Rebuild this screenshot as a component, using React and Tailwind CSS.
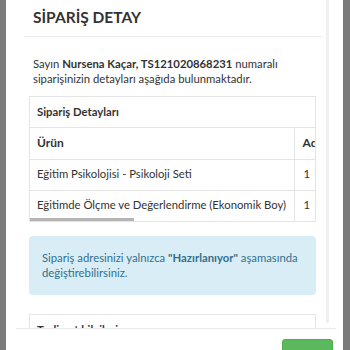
import React from 'react';

const rows = [
  { name: 'Eğitim Psikolojisi - Psikoloji Seti', qty: 1 },
  { name: 'Eğitimde Ölçme ve Değerlendirme (Ekonomik Boy)', qty: 1 },
];

export default function App() {
  return (
    <div className="w-[350px] h-[350px] bg-[#7b7b7b] overflow-hidden flex" style={{ fontFamily: 'Lato, "Open Sans", sans-serif' }}>
      {/* modal */}
      <div className="ml-[6px] w-[337px] h-full bg-white flex flex-col">
        {/* scrolling part */}
        <div className="h-[328px] flex shrink-0">
          <div className="ml-[18px] w-[299px] overflow-hidden">
            <div className="h-[37px] border-b border-[#ececec] pl-[9px] flex items-end pb-[11px]">
              <h1 className="text-[15.5px] font-bold leading-none text-[#333]">SİPARİŞ DETAY</h1>
            </div>

            <p className="pl-[9px] pr-[10px] mt-[19px] text-[11.3px] leading-[15px] text-[#333]">
              Sayın <b className="font-bold">Nursena Kaçar, TS121020868231</b> numaralı siparişinizin detayları aşağıda bulunmaktadır.
            </p>

            {/* order details panel */}
            <div className="ml-[5px] w-[287px] mt-[10px] border border-[#e4e4e4] overflow-hidden">
              <div className="h-[31px] flex items-center pl-[7px] border-b border-[#e4e4e4] text-[11.3px] font-bold text-[#333]">
                Sipariş Detayları
              </div>
              <table className="table-fixed w-[340px] border-collapse text-[11.3px] text-[#333]">
                <colgroup>
                  <col className="w-[264px]" />
                  <col className="w-[76px]" />
                </colgroup>
                <thead>
                  <tr className="h-[31px] border-b border-[#e4e4e4]">
                    <th className="text-left font-bold pl-[7px] border-r border-[#e4e4e4] text-[12px]">Ürün</th>
                    <th className="text-left font-bold pl-[8px] text-[12px]">Adet</th>
                  </tr>
                </thead>
                <tbody>
                  {rows.map((r, i) => (
                    <tr key={i} className={`h-[31px] ${i === 0 ? 'border-b border-[#e4e4e4]' : ''}`}>
                      <td className="pl-[7px] whitespace-nowrap border-r border-[#e4e4e4]">{r.name}</td>
                      <td className="pl-[9px]">{r.qty}</td>
                    </tr>
                  ))}
                </tbody>
              </table>
              {/* horizontal scrollbar */}
              <div className="h-[3px] -mt-[3px] relative">
                <div className="w-[104px] h-[3px] bg-[#b5b5b5]" />
              </div>
            </div>

            {/* info alert */}
            <div className="ml-[5px] w-[287px] mt-[14px] h-[59px] rounded-[4px] bg-[#d9edf7] px-[13px] py-[14px] text-[11.3px] leading-[15px] text-[#31708f]">
              Sipariş adresinizi yalnızca <b className="font-bold">"Hazırlanıyor"</b> aşamasında değiştirebilirsiniz.
            </div>

            {/* next panel */}
            <div className="ml-[5px] w-[287px] mt-[19px] h-[40px] border border-[#e4e4e4] pl-[7px] pt-[7px] text-[11.3px] leading-[15px] font-bold text-[#333]">
              Teslimat bilgileri
            </div>
          </div>
          {/* vertical scrollbar track */}
          <div className="w-[3px] ml-[3px] h-[323px] bg-[#f0f0f0]" />
        </div>

        {/* footer */}
        <div className="flex-1 ml-[10px] mr-[7px] border-t border-[#e9e9e9] flex justify-end pt-[10px] pr-[3px]">
          <button className="w-[51px] h-[30px] rounded-[3px] bg-[#5cb85c] border border-[#4cae4c] text-white text-[12px]">
            Kapat
          </button>
        </div>
      </div>
    </div>
  );
}
